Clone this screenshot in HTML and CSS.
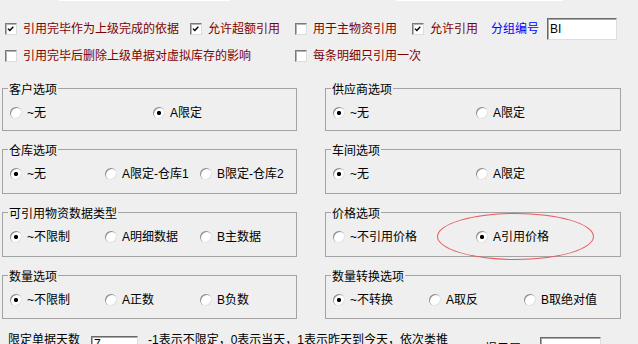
FILE: index.html
```html
<!DOCTYPE html>
<html lang="zh-CN">
<head>
<meta charset="utf-8">
<title>引用选项</title>
<link rel="stylesheet" href="styles.css">
</head>
<body>
<div class="topbar"><span class="bar1"></span><span class="bar2"></span></div>

<div class="row row1">
  <label class="check w185"><span class="cb on"><svg viewBox="0 0 13 13" width="13" height="13"><polyline points="2.5,6 5,8.5 9.5,3.5"/></svg></span>引用完毕作为上级完成的依据</label>
  <label class="check w105"><span class="cb on"><svg viewBox="0 0 13 13" width="13" height="13"><polyline points="2.5,6 5,8.5 9.5,3.5"/></svg></span>允许超额引用</label>
  <label class="check w117"><span class="cb"></span>用于主物资引用</label>
  <label class="check w79"><span class="cb on"><svg viewBox="0 0 13 13" width="13" height="13"><polyline points="2.5,6 5,8.5 9.5,3.5"/></svg></span>允许引用</label>
  <span class="blue w56">分组编号</span>
  <span class="field code">BI</span>
</div>

<div class="row row2">
  <label class="check w290"><span class="cb"></span>引用完毕后删除上级单据对虚拟库存的影响</label>
  <label class="check"><span class="cb"></span>每条明细只引用一次</label>
</div>

<div class="groups">
  <div class="group">
    <span class="legend">客户选项</span>
    <div class="opts">
      <span class="opt o2"><span class="radio"></span>~无</span>
      <span class="opt o2"><span class="radio on"></span>A限定</span>
    </div>
  </div>
  <div class="group">
    <span class="legend">供应商选项</span>
    <div class="opts">
      <span class="opt o2"><span class="radio on"></span>~无</span>
      <span class="opt o2"><span class="radio"></span>A限定</span>
    </div>
  </div>

  <div class="group">
    <span class="legend">仓库选项</span>
    <div class="opts">
      <span class="opt o3"><span class="radio on"></span>~无</span>
      <span class="opt o3"><span class="radio"></span>A限定-仓库1</span>
      <span class="opt o3"><span class="radio"></span>B限定-仓库2</span>
    </div>
  </div>
  <div class="group">
    <span class="legend">车间选项</span>
    <div class="opts">
      <span class="opt o2"><span class="radio on"></span>~无</span>
      <span class="opt o2"><span class="radio"></span>A限定</span>
    </div>
  </div>

  <div class="group">
    <span class="legend">可引用物资数据类型</span>
    <div class="opts">
      <span class="opt o3"><span class="radio on"></span>~不限制</span>
      <span class="opt o3"><span class="radio"></span>A明细数据</span>
      <span class="opt o3"><span class="radio"></span>B主数据</span>
    </div>
  </div>
  <div class="group price">
    <span class="legend">价格选项</span>
    <div class="opts">
      <span class="opt o2"><span class="radio"></span>~不引用价格</span>
      <span class="opt o2"><span class="radio on"></span>A引用价格</span>
    </div>
    <span class="mark"></span>
  </div>

  <div class="group">
    <span class="legend">数量选项</span>
    <div class="opts">
      <span class="opt o3"><span class="radio on"></span>~不限制</span>
      <span class="opt o3"><span class="radio"></span>A正数</span>
      <span class="opt o3"><span class="radio"></span>B负数</span>
    </div>
  </div>
  <div class="group">
    <span class="legend">数量转换选项</span>
    <div class="opts">
      <span class="opt o3r"><span class="radio on"></span>~不转换</span>
      <span class="opt o3"><span class="radio"></span>A取反</span>
      <span class="opt o3"><span class="radio"></span>B取绝对值</span>
    </div>
  </div>
</div>

<div class="bottom">
  <span class="blabel">限定单据天数</span>
  <span class="field days">7</span>
  <span class="hint">-1表示不限定，0表示当天，1表示昨天到今天，依次类推</span>
  <span class="blabel2">提示层</span>
  <span class="field last"></span>
</div>
</body>
</html>
```
FILE: styles.css
```css
html, body {
  margin: 0;
  padding: 0;
}
body {
  background: #eeefee;
  color: #000;
  font-family: "Liberation Sans", "Noto Sans CJK SC", sans-serif;
  font-size: 12px;
  line-height: 16px;
  width: 638px;
  height: 344px;
  overflow: hidden;
}

.topbar {
  display: flex;
  height: 1px;
}
.bar1 {
  margin-left: 59px;
  width: 171px;
  background: #fff;
}
.bar2 {
  margin-left: 166px;
  width: 167px;
  background: #fff;
}

.row {
  display: flex;
  align-items: center;
  height: 22px;
  padding-left: 5px;
}
.row1 { margin-top: 17px; }
.row2 { margin-top: 5px; }

.check {
  display: flex;
  align-items: center;
  gap: 6px;
  color: #800000;
  white-space: nowrap;
}
.w185 { width: 185px; }
.w105 { width: 105px; }
.w117 { width: 117px; }
.w79 { width: 79px; }
.w56 { width: 56px; }
.w290 { width: 290px; }

.cb {
  flex: none;
  width: 12px;
  height: 12px;
  box-sizing: border-box;
  background: #fff;
  border: 1px solid;
  border-color: #7a7a7a #dcdcdc #dcdcdc #7a7a7a;
  box-shadow: inset 1px 1px 0 #b4b4b4;
  display: flex;
}
.cb svg {
  width: 10px;
  height: 10px;
}
.cb polyline {
  fill: none;
  stroke: #000;
  stroke-width: 1.8;
}

.blue { color: #0000ff; white-space: nowrap; }

.field {
  display: block;
  height: 22px;
  box-sizing: border-box;
  background: #fff;
  border: 1px solid;
  border-color: #6a6a6a #dedede #dedede #6a6a6a;
  box-shadow: inset 1px 1px 0 #a8a8a8;
  padding: 2px 2px 0;
  line-height: 17px;
  color: #000;
}
.code { width: 70px; }

.groups {
  display: grid;
  grid-template-columns: 295px 296px;
  grid-template-rows: 43px 45px 45px 44px;
  column-gap: 28px;
  row-gap: 18px;
  padding-left: 2px;
  margin-top: 21px;
}
.group {
  position: relative;
  border: 1px solid #a3a3a3;
  box-sizing: border-box;
  padding-left: 7px;
}
.legend {
  display: block;
  width: max-content;
  margin: -6px 0 0 -2px;
  padding: 0 1px;
  background: #eeefee;
  line-height: 14px;
}
.opts {
  display: flex;
  align-items: center;
  height: 16px;
  margin-top: 8px;
}
.opt {
  display: flex;
  align-items: center;
  gap: 5px;
  white-space: nowrap;
  flex: none;
}
.o2 { width: 143px; }
.o3 { width: 95px; }
.o3r { width: 96px; }

.radio {
  flex: none;
  width: 12px;
  height: 12px;
  border-radius: 50%;
  background: #fff;
  box-shadow: inset 1px 1px 0 #8c8c8c, inset -1px -1px 0 #e2e2e2;
}
.radio.on {
  background: radial-gradient(circle at 6px 6px, #000 0 1.8px, #fff 2.4px);
}

.mark {
  position: absolute;
  left: 111px;
  top: 0;
  width: 157px;
  height: 47px;
  box-sizing: border-box;
  border: 1px solid #e55a5e;
  border-radius: 50%;
}

.bottom {
  display: flex;
  align-items: flex-start;
  margin-top: 13px;
  padding-left: 8px;
  white-space: nowrap;
}
.blabel { width: 83px; }
.days {
  width: 47px;
  margin-top: 4px;
  margin-right: 10px;
  padding-top: 0;
  line-height: 14px;
}
.hint { width: 337px; }
.blabel2 { width: 55px; padding-top: 9px; }
.last {
  width: 61px;
  margin-top: 5px;
}
```
